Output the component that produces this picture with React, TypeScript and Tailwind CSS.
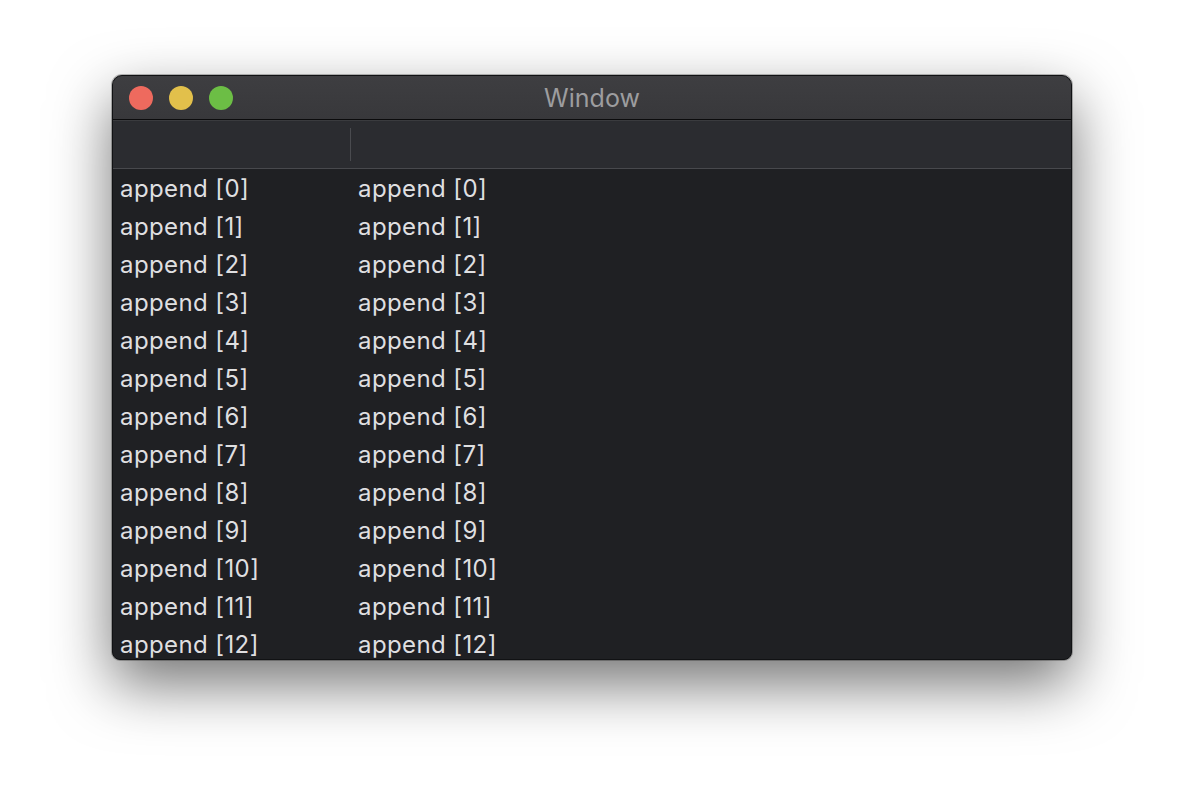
const ROWS = Array.from({ length: 13 }, (_, i) => `append [${i}]`);

const FONT = "font-['Inter','Helvetica_Neue','Liberation_Sans',sans-serif]";

export default function App() {
  return (
    <div className={`w-[1184px] h-[808px] bg-white flex items-start justify-center pt-[75px] ${FONT}`}>
      <div className="w-[960px] h-[585px] flex flex-col rounded-t-[10px] rounded-b-[8px] border border-[#111214] bg-[#1f2023] overflow-hidden shadow-[0_24px_60px_rgba(0,0,0,0.55),0_0_0_1px_rgba(0,0,0,0.25)]">
        {/* Title bar */}
        <div className="relative h-[44px] flex-none flex items-center bg-gradient-to-b from-[#3e3e41] to-[#38383b] border-b border-[#0b0b0c]">
          <div className="flex items-center gap-[16px] pl-[16px]">
            <span className="w-[24px] h-[24px] rounded-full bg-[#ee6a5e]" />
            <span className="w-[24px] h-[24px] rounded-full bg-[#e2c04b]" />
            <span className="w-[24px] h-[24px] rounded-full bg-[#6cbe45]" />
          </div>
          <div className="absolute inset-0 flex items-center justify-center pt-[2px] text-[25px] text-[#9d9d9f] pointer-events-none">
            Window
          </div>
        </div>

        {/* Column header */}
        <div className="h-[49px] flex-none flex items-center bg-[#2b2c30] border-t border-[#3a3b3e] border-b border-b-[#48494d]">
          <div className="w-[238px] h-[33px] border-r border-[#4a4b4f]" />
          <div className="flex-1" />
        </div>

        {/* Rows */}
        <div className="flex-1 overflow-hidden">
          {ROWS.map((r) => (
            <div key={r} className="h-[38px] flex items-center pt-[2px] text-[24px] text-[#dfdfe0] tracking-[0.4px]">
              <div className="w-[245px] pl-[7px]">{r}</div>
              <div>{r}</div>
            </div>
          ))}
        </div>
      </div>
    </div>
  );
}
